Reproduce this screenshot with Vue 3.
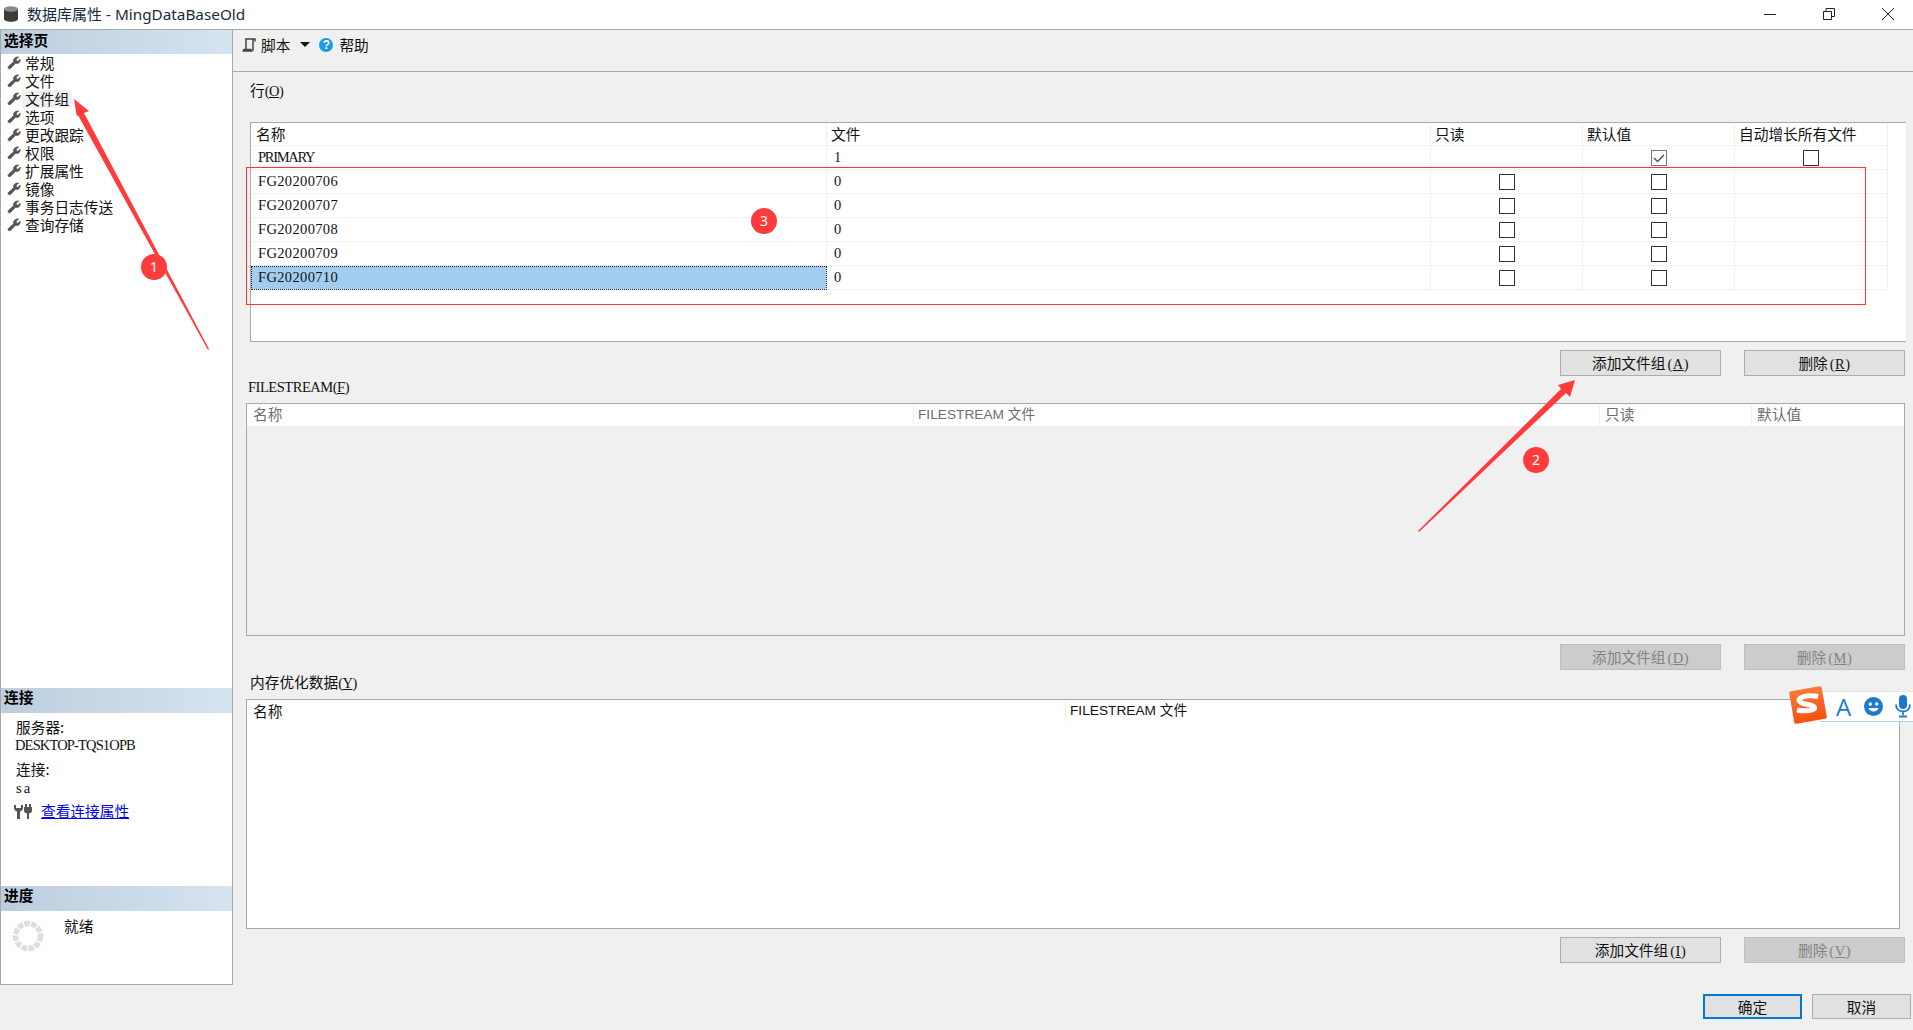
<script setup>
const navItems = ['常规', '文件', '文件组', '选项', '更改跟踪', '权限', '扩展属性', '镜像', '事务日志传送', '查询存储']
const rows = [
  { name: 'PRIMARY', files: '1', ro: null, def: true, auto: false, tight: true },
  { name: 'FG20200706', files: '0', ro: false, def: false, auto: null },
  { name: 'FG20200707', files: '0', ro: false, def: false, auto: null },
  { name: 'FG20200708', files: '0', ro: false, def: false, auto: null },
  { name: 'FG20200709', files: '0', ro: false, def: false, auto: null },
  { name: 'FG20200710', files: '0', ro: false, def: false, auto: null, selected: true }
]
const wrench = 'M12.6 1.2 9.9 3.6l.3 1.7 1.6.4 2.3-2.4c.3 1.7-.2 3.2-1.4 4.1-1.1.8-2.4.9-3.5.5L3.9 13.2c-.7.7-1.7.7-2.3.1-.7-.7-.6-1.7.1-2.4l5.4-4.7c-.4-1.2-.2-2.6.7-3.6 1.2-1.3 3.1-1.9 4.8-1.4z'
</script>

<template>
  <div class="window">
    <header class="titlebar">
      <svg class="db-icon" width="18" height="18" viewBox="0 0 18 18">
        <path d="M2 4v10c0 1.6 3.2 2.8 7 2.8s7-1.2 7-2.8V4z" fill="#3c3c3c" />
        <ellipse cx="9" cy="4" rx="7" ry="2.8" fill="#8c8c8c" />
      </svg>
      <span class="title-cjk">数据库属性</span>
      <span class="title-latin">&nbsp;- MingDataBaseOld</span>
      <div class="winctl">
        <svg width="12" height="12" viewBox="0 0 12 12" class="w-min"><path d="M0 6.500h12" stroke="#222" fill="none" /></svg>
        <svg width="12" height="12" viewBox="0 0 12 12" class="w-max"><path d="M.5 3.500h8v8h-8zM3 3.500V.5h8.500v8H8.500" stroke="#222" fill="none" /></svg>
        <svg width="12" height="12" viewBox="0 0 12 12" class="w-close"><path d="M0 0l12 12M12 0 0 12" stroke="#222" fill="none" /></svg>
      </div>
    </header>

    <div class="body">
      <aside class="sidebar">
        <section class="sec-pages">
          <h2 class="sec-head">选择页</h2>
          <ul class="nav">
            <li v-for="item in navItems" :key="item" class="nav-item">
              <svg class="wrench" width="14" height="14" viewBox="0 0 15 15"><path :d="wrench" fill="#555" stroke="#555" stroke-width=".7" /></svg>
              <span :class="['nav-label', { hover: item === '文件组' }]">{{ item }}</span>
            </li>
          </ul>
        </section>
        <section class="sec-conn">
          <h2 class="sec-head conn-head">连接</h2>
          <div class="info-label first">服务器:</div>
          <div class="info-value">DESKTOP-TQS1OPB</div>
          <div class="info-label second">连接:</div>
          <div class="info-value sa">sa</div>
          <div class="link-row">
            <svg width="20" height="17" viewBox="0 0 20 17">
              <path d="M1 2v3c0 2 1.500 3 3 3.500V16h3V8.500C8.500 8 10 7 10 5V2H8v3H3V2z" fill="#555" />
              <path d="M12 1h2v3h2V1h2v3h1v4c0 1-1 2-3 2.500V16h-2v-5.500c-2-.5-3-1.500-3-2.500V4h1z" fill="#555" />
            </svg>
            <a class="link">查看连接属性</a>
          </div>
        </section>
        <section class="sec-progress">
          <h2 class="sec-head conn-head">进度</h2>
          <div class="progress-row">
            <svg width="32" height="32" viewBox="0 0 32 32" class="spinner">
              <circle cx="16" cy="16" r="12.500" fill="none" stroke="#dedede" stroke-width="5.500" stroke-dasharray="5.500 1.350" />
            </svg>
            <span class="ready">就绪</span>
          </div>
        </section>
      </aside>

      <main class="main">
        <div class="toolbar">
          <svg width="16" height="16" viewBox="0 0 16 16" class="script-icon">
            <path d="M4 2h10v2.500M5 2v10.500M12 2v10.500c0 1-.8 1.500-1.500 1.500H1.500c.8 0 1.500-.6 1.500-1.500h7.500" fill="none" stroke="#444" stroke-width="1.500" />
          </svg>
          <span class="tool-text script-text">脚本</span>
          <span class="caret"></span>
          <span class="help-icon">?</span>
          <span class="tool-text">帮助</span>
        </div>

        <div class="label label-rows">行<span class="mono">(<u>O</u>)</span></div>
        <div class="grid grid-rows">
          <div class="gr-row gr-head">
            <div class="h-name">名称</div><div class="h-cell">文件</div><div class="h-cell">只读</div><div class="h-cell">默认值</div><div class="h-cell">自动增长所有文件</div>
          </div>
          <div v-for="r in rows" :key="r.name" class="gr-row">
            <div :class="['mono', 'd-cell', { selected: r.selected, tight: r.tight, fg: !r.tight }]">{{ r.name }}</div>
            <div class="mono d-cell">{{ r.files }}</div>
            <div class="c-cell"><span v-if="r.ro !== null" class="check"></span></div>
            <div class="c-cell">
              <span :class="['check', { checked: r.def }]">
                <svg v-if="r.def" width="14" height="14" viewBox="0 0 14 14"><path d="M2 7l3.500 3.500L12 4" fill="none" stroke="#555" stroke-width="1.500" /></svg>
              </span>
            </div>
            <div class="c-cell"><span v-if="r.auto !== null" class="check"></span></div>
          </div>
        </div>

        <div class="btn-row">
          <button class="btn">添加文件组<span class="mono">(<u>A</u>)</span></button>
          <button class="btn">删除<span class="mono">(<u>R</u>)</span></button>
        </div>

        <div class="label label-fs"><span class="mono fs-label">FILESTREAM(<u>F</u>)</span></div>
        <div class="grid grid-fs">
          <div class="fs-head">
            <div class="fs-c1">名称</div>
            <div class="fs-c2 latin">FILESTREAM 文件</div>
            <div class="fs-c3">只读</div>
            <div class="fs-c4">默认值</div>
          </div>
        </div>

        <div class="btn-row">
          <button class="btn disabled">添加文件组<span class="mono">(<u>D</u>)</span></button>
          <button class="btn disabled">删除<span class="mono">(<u>M</u>)</span></button>
        </div>

        <div class="label label-mem">内存优化数据<span class="mono">(<u>Y</u>)</span></div>
        <div class="grid grid-mem">
          <div class="mem-head">
            <div class="mem-c1">名称</div>
            <div class="mem-c2 latin">FILESTREAM 文件</div>
          </div>
        </div>

        <div class="btn-row">
          <button class="btn">添加文件组<span class="mono">(<u>I</u>)</span></button>
          <button class="btn disabled">删除<span class="mono">(<u>V</u>)</span></button>
        </div>

        <div class="footer">
          <button class="foot-btn primary">确定</button>
          <button class="foot-btn">取消</button>
        </div>
      </main>
    </div>

    <!-- screenshot annotations laid over the dialog -->
    <div class="red-rect"></div>
    <svg class="arrows" width="1913" height="1030" viewBox="0 0 1913 1030">
      <polygon points="74,99 89,111 84,113 209,349 208,350 78.500,116 76.500,115" fill="#ff3b3b" />
      <polygon points="1575,380 1570,397 1566,393 1419,532 1418,531 1561,389 1558,385" fill="#ff3b3b" />
    </svg>
    <div class="badge b1">1</div>
    <div class="badge b2">2</div>
    <div class="badge b3">3</div>

    <!-- input method toolbar floating at the screen edge -->
    <div class="ime">
      <span class="ime-a">A</span>
      <svg width="19" height="19" viewBox="0 0 19 19" class="ime-face">
        <circle cx="9.500" cy="9.500" r="9.500" fill="#1f78cf" />
        <circle cx="6.300" cy="7" r="1.700" fill="#fff" />
        <circle cx="12.700" cy="7" r="1.700" fill="#fff" />
        <path d="M4.500 11c1 4.500 9 4.500 10 0z" fill="#fff" />
      </svg>
      <svg width="16" height="24" viewBox="0 0 16 24" class="ime-mic">
        <rect x="4" y="0" width="8" height="14" rx="4" fill="#1f78cf" />
        <path d="M1 9.500c0 4.500 3 7 7 7s7-2.500 7-7M8 17v3M4 21.500h8" fill="none" stroke="#1f78cf" stroke-width="1.800" />
      </svg>
    </div>
    <svg class="ime-logo" width="42" height="42" viewBox="0 0 42 42">
      <defs>
        <linearGradient id="sg" x1="0" y1="0" x2="0" y2="1">
          <stop offset="0" stop-color="#fb7a3a" />
          <stop offset="1" stop-color="#f5500f" />
        </linearGradient>
      </defs>
      <rect x="4.500" y="4.500" width="33" height="33" rx="2" fill="url(#sg)" transform="rotate(-10 21 21)" />
      <path d="M31 12.500c-6-1.500-14-1-17.500 1.500-3 2-1 4.500 2.500 5.500l9 2c3 1 3.500 3 1 4-4 1.500-11 1.500-16 .5" fill="none" stroke="#fff" stroke-width="5" />
    </svg>
  </div>
</template>

<style>
html, body { margin: 0; padding: 0; background: #f0f0f0; overflow: hidden; }
</style>

<style scoped>
.window {
  position: relative;
  width: 1913px;
  height: 1030px;
  overflow: hidden;
  background: #f0f0f0;
  display: flex;
  flex-direction: column;
  font-family: "Noto Sans CJK SC", "Liberation Sans", sans-serif;
  font-size: 14.7px;
  color: #111;
}
.mono { font-family: "Liberation Serif", "Noto Sans CJK SC", serif; font-size: 14.5px; letter-spacing: -0.5px; }
.latin { font-family: "Liberation Sans", "Noto Sans CJK SC", sans-serif; font-size: 13.7px; }

.titlebar {
  height: 29px;
  box-sizing: content-box;
  flex: none;
  background: #fff;
  border-bottom: 1px solid #a8a8a8;
  display: flex;
  align-items: center;
}
.db-icon { margin: 0 7px 2px 2px; }
.title-cjk { font-size: 15px; color: #1a2a3a; margin-bottom: 2px; }
.title-latin { font-family: "Noto Sans", sans-serif; font-size: 15.300px; color: #1a2a3a; margin-bottom: 2px; }
.winctl { margin: 0 0 2px auto; display: flex; align-items: center; }
.w-min { margin-right: 47px; }
.w-max { margin-right: 47px; }
.w-close { margin-right: 19px; }

.body { display: flex; flex: none; height: 1000px; align-items: flex-start; }

.sidebar {
  width: 233px;
  height: 955px;
  box-sizing: border-box;
  flex: none;
  background: #fff;
  border: 1px solid #a8a8a8;
  border-top: 0;
  display: flex;
  flex-direction: column;
}
.sec-pages { flex: 1; }
.sec-head {
  margin: 0;
  height: 24px;
  padding-left: 3px;
  line-height: 20px;
  font-size: 14.7px;
  font-weight: 700;
  color: #000;
  background: linear-gradient(90deg, #bccddd, #d6e4f1);
}
.conn-head { height: 25px; line-height: 18px; }
.nav { list-style: none; margin: 0; padding: 0; }
.nav-item { height: 18px; display: flex; align-items: center; }
.wrench { margin-left: 6px; margin-right: 1px; flex: none; }
.nav-label { padding: 0 3px; height: 18px; line-height: 17px; }
.nav-label.hover { background: #f0f0f0; }

.sec-conn { height: 198px; flex: none; }
.info-label { padding-left: 15px; line-height: 10px; height: 16px; }
.info-label.first { margin-top: 9px; }
.info-label.second { margin-top: 12px; }
.info-value {
  padding-left: 14px;
  line-height: 14px;
  height: 14px;
  font-family: "Liberation Serif", serif;
  font-size: 14.5px;
  letter-spacing: -0.85px;
}
.info-value.sa { padding-left: 15px; margin-top: 1px; letter-spacing: 2px; }
.link-row { display: flex; align-items: center; margin-top: 6px; padding-left: 12px; height: 20px; }
.link { margin-left: 8px; color: #0000ee; text-decoration: underline; line-height: 16px; }

.sec-progress { height: 98px; flex: none; }
.progress-row { display: flex; align-items: flex-start; padding: 9px 0 0 11px; }
.ready { margin-left: 20px; margin-top: -3px; line-height: 18px; }

.main { flex: 1; min-width: 0; display: flex; flex-direction: column; height: 1000px; }
.toolbar {
  height: 29px;
  flex: none;
  border-bottom: 1px solid #a8a8a8;
  display: flex;
  align-items: center;
  padding: 0 0 12px 8px;
}
.tool-text { line-height: 18px; }
.script-icon { margin-right: 4px; }
.caret {
  width: 0; height: 0;
  margin-left: 10px;
  border-left: 5px solid transparent;
  border-right: 5px solid transparent;
  border-top: 5px solid #111;
}
.help-icon {
  width: 14px; height: 14px;
  margin: 0 6px 0 9px;
  border-radius: 50%;
  background: #1c9be3;
  color: #fff;
  font-family: "Liberation Sans", sans-serif;
  font-weight: 700;
  font-size: 12px;
  line-height: 14px;
  text-align: center;
}

.label { height: 16px; line-height: 12px; white-space: nowrap; }
.label-rows { margin: 12px 0 0 17px; }
.label-fs { margin: 4px 0 0 15px; }
.label-mem { margin: 5px 0 0 17px; line-height: 14px; }
.fs-label { letter-spacing: -0.47px; }

.grid { box-sizing: border-box; border: 1px solid #a8a8a8; flex: none; }
.grid-rows { margin: 22px 7px 0 17px; height: 220px; background: #fff; border-right: 0; }
.gr-row {
  display: grid;
  grid-template-columns: 576px 604px 152px 152px 153px;
  height: 24px;
}
.gr-row > div { box-sizing: border-box; border-right: 1px solid #f0f0f0; border-bottom: 1px solid #f0f0f0; }
.gr-row.gr-head { height: 23px; }
.h-name { padding-left: 5px; line-height: 22px; }
.h-cell { padding-left: 4px; line-height: 22px; white-space: nowrap; }
.d-cell { padding-left: 7px; line-height: 23px; letter-spacing: 0; }
.fg { letter-spacing: 0.35px; }
.tight { letter-spacing: -1.3px; }
.selected { background: #a3cdf0; outline: 1px dotted #222; outline-offset: -1px; }
.c-cell { display: flex; align-items: center; justify-content: center; }
.check {
  width: 16px; height: 16px;
  box-sizing: border-box;
  border: 1px solid #333;
  background: #fff;
  display: flex;
  align-items: center;
  justify-content: center;
}
.check.checked { border-color: #777; }

.btn-row { display: flex; justify-content: flex-end; gap: 23px; margin: 8px 8px 0 0; flex: none; }
.btn {
  width: 161px;
  height: 26px;
  box-sizing: border-box;
  padding: 0;
  border: 1px solid #adadad;
  background: #e1e1e1;
  font-family: inherit;
  font-size: 14.7px;
  line-height: 22px;
  color: #111;
}
.btn .mono { margin-left: 2px; letter-spacing: 0.5px; }
.btn.disabled { background: #cccccc; border-color: #bfbfbf; color: #838383; }

.grid-fs { margin: 7px 8px 0 13px; height: 233px; }
.fs-head {
  height: 22px;
  background: #fff;
  display: grid;
  grid-template-columns: 667px 686px 152px 153px;
  color: #6d6d6d;
  line-height: 20px;
}
.fs-head > div { box-sizing: border-box; border-right: 1px solid #f0f0f0; }
.fs-c1 { padding-left: 6px; }
.fs-head > .fs-c2 { padding-left: 4px; line-height: 22px; }
.fs-c3, .fs-c4 { padding-left: 5px; }
.fs-c4 { border-right: 0 !important; }

.grid-mem { margin: 8px 13px 0 13px; height: 230px; background: #fff; }
.mem-head { height: 22px; display: grid; grid-template-columns: 819px 1fr; line-height: 22px; color: #111; }
.mem-c1 { padding-left: 6px; border-right: 1px solid #f0f0f0; }
.mem-c2 { padding-left: 4px; }

.footer { display: flex; justify-content: flex-end; gap: 10px; margin: 31px 2px 0 0; flex: none; }
.foot-btn {
  width: 99px;
  height: 25px;
  box-sizing: border-box;
  padding: 0;
  border: 1px solid #adadad;
  background: #e1e1e1;
  font-family: inherit;
  font-size: 14.7px;
  line-height: 21px;
  color: #111;
}
.foot-btn.primary { border: 2px solid #0078d7; }

.red-rect {
  position: absolute;
  left: 246px;
  top: 167px;
  width: 1618px;
  height: 136px;
  border: 1px solid #ff3333;
}
.arrows { position: absolute; left: 0; top: 0; pointer-events: none; }
.badge {
  position: absolute;
  width: 26px;
  height: 26px;
  border-radius: 50%;
  background: #ff3b3b;
  color: #fff;
  font-family: "Noto Sans", sans-serif;
  font-size: 14px;
  line-height: 26px;
  text-align: center;
}
.b1 { left: 141px; top: 254px; }
.b2 { left: 1523px; top: 447px; }
.b3 { left: 751px; top: 208px; }

.ime {
  position: absolute;
  left: 1820px;
  top: 691px;
  width: 93px;
  height: 31px;
  box-sizing: border-box;
  background: #fff;
  border-top: 1px solid #dbe6f0;
  border-bottom: 1px solid #b6d0e8;
  display: flex;
  align-items: center;
}
.ime-a { margin-left: 16px; font-family: "Open Sans", sans-serif; font-size: 24px; line-height: 29px; color: #1f78cf; }
.ime-face { margin-left: 13px; }
.ime-mic { margin-left: 12px; }
.ime-logo { position: absolute; left: 1787px; top: 684px; }
</style>
